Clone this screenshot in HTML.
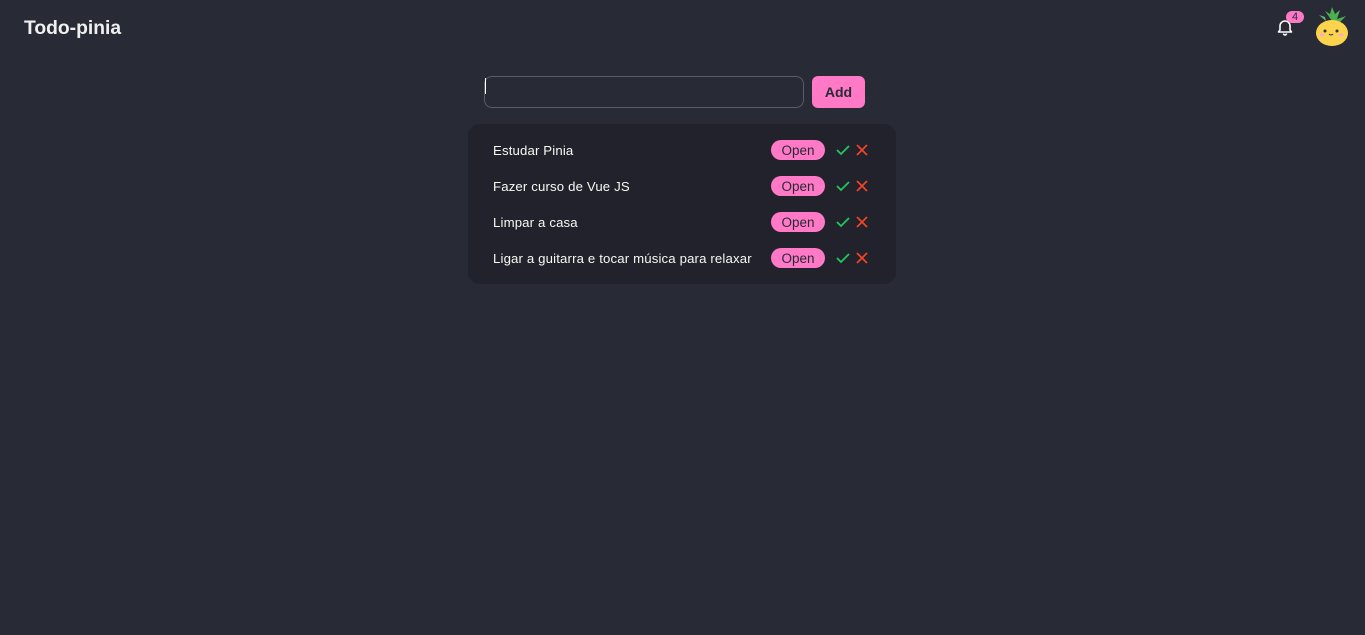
<!DOCTYPE html>
<html><head><meta charset="utf-8"><style>
*{box-sizing:border-box;margin:0;padding:0}
body{width:1365px;height:635px;background:#282a36;font-family:"Liberation Sans",sans-serif;color:#fff;position:relative;overflow:hidden}
.title{position:absolute;left:24px;top:18px;font-size:19.3px;font-weight:bold;color:#f0f0f0}
.input{position:absolute;left:484px;top:76px;width:320px;height:32px;border:1px solid #5a5c66;border-radius:8px;background:#282a36}
.caret{position:absolute;left:485px;top:78px;width:1px;height:16px;background:#fff}
.add{position:absolute;left:812px;top:76px;width:53px;height:32px;background:#ff79c6;border-radius:6px;color:#282a36;font-size:14px;font-weight:bold;text-align:center;line-height:33px}
.list{position:absolute;left:468px;top:124px;width:428px;height:160px;background:#21222c;border-radius:12px}
.row{position:absolute;left:25px;font-size:13.2px;color:#f8f8f2;height:20px;line-height:21px;letter-spacing:0.15px}
.open{position:absolute;left:303px;width:54px;height:20px;background:#ff79c6;border-radius:10px;color:#282a36;font-size:13.5px;text-align:center;line-height:21px}
.ic{position:absolute;left:368px}
.badge{position:absolute;left:1286px;top:11px;width:18px;height:12px;background:#ff79c6;border-radius:6px;color:#282a36;font-size:11px;line-height:12px;text-align:center}
</style></head><body>
<div class="title">Todo-pinia</div>
<svg style="position:absolute;left:1277px;top:18px" width="16" height="18" viewBox="0 0 16 18"><path d="M3 12V8a5 5 0 0 1 10 0v4l1.5 2h-13z M6.5 15.5a1.5 1.5 0 0 0 3 0" fill="none" stroke="#fff" stroke-width="1.6" stroke-linejoin="round"/></svg>
<div class="badge">4</div>
<svg style="position:absolute;left:1313px;top:5px" width="38" height="42" viewBox="0 0 38 42">
<path d="M19 16 L12 6 L17 9 L19 2 L22 9 L27 5 L24 14 L33 11 L26 18 Z" fill="#4caf50"/>
<path d="M13 16 L6 10 L12 12 Z" fill="#66bb6a"/>
<ellipse cx="19" cy="28" rx="16" ry="13" fill="#fcd34d"/>
<circle cx="12" cy="26" r="1.5" fill="#333"/><circle cx="24" cy="26" r="1.5" fill="#333"/>
<ellipse cx="9" cy="30" rx="2.5" ry="1.5" fill="#f9a8d4"/><ellipse cx="28" cy="30" rx="2.5" ry="1.5" fill="#f9a8d4"/>
<path d="M16 29 q2 2 4 0" stroke="#333" fill="none" stroke-width="1"/>
</svg>
<div class="input"></div><div class="caret"></div>
<div class="add">Add</div>
<div class="list">
<div class="row" style="top:16px">Estudar Pinia</div>
<div class="row" style="top:52px">Fazer curso de Vue JS</div>
<div class="row" style="top:88px">Limpar a casa</div>
<div class="row" style="top:124px">Ligar a guitarra e tocar música para relaxar</div>
<div class="open" style="top:16px">Open</div>
<div class="open" style="top:52px">Open</div>
<div class="open" style="top:88px">Open</div>
<div class="open" style="top:124px">Open</div>
<svg class="ic" style="top:19px" width="34" height="14" viewBox="0 0 34 14"><path d="M1 7l4 4 8-8" stroke="#22c55e" stroke-width="1.8" fill="none"/><path d="M21 2l10 10M31 2L21 12" stroke="#ef4423" stroke-width="1.8"/></svg>
<svg class="ic" style="top:55px" width="34" height="14" viewBox="0 0 34 14"><path d="M1 7l4 4 8-8" stroke="#22c55e" stroke-width="1.8" fill="none"/><path d="M21 2l10 10M31 2L21 12" stroke="#ef4423" stroke-width="1.8"/></svg>
<svg class="ic" style="top:91px" width="34" height="14" viewBox="0 0 34 14"><path d="M1 7l4 4 8-8" stroke="#22c55e" stroke-width="1.8" fill="none"/><path d="M21 2l10 10M31 2L21 12" stroke="#ef4423" stroke-width="1.8"/></svg>
<svg class="ic" style="top:127px" width="34" height="14" viewBox="0 0 34 14"><path d="M1 7l4 4 8-8" stroke="#22c55e" stroke-width="1.8" fill="none"/><path d="M21 2l10 10M31 2L21 12" stroke="#ef4423" stroke-width="1.8"/></svg>
</div>
</body></html>
